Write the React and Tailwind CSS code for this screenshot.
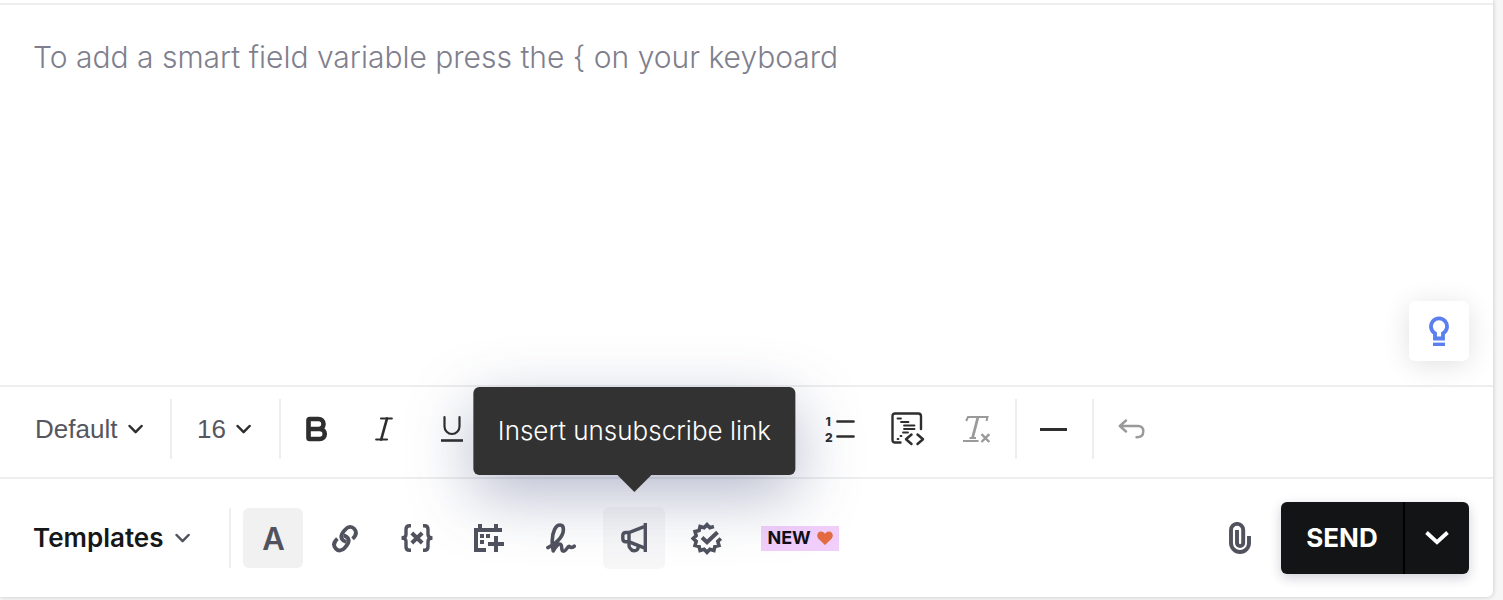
import React from "react";
import { Bold } from "lucide-react";

function Chevron({ className = "" }) {
  return (
    <svg viewBox="0 0 16 10" className={`h-[10px] w-4 ${className}`} fill="none" stroke="currentColor" strokeWidth="2.5" strokeLinecap="round" strokeLinejoin="round">
      <path d="M1.6 2 L7.6 8.2 L13.6 2" />
    </svg>
  );
}

function ToolSelect({ label, value, className }) {
  return (
    <label className={`relative flex items-center text-[#55565f] ${className}`}>
      <select aria-label={label} defaultValue={value} className="appearance-none bg-transparent pr-[26px] text-[26px] leading-8 outline-none">
        <option>{value}</option>
      </select>
      <Chevron className="pointer-events-none absolute right-0 text-[#2e2e2e]" />
    </label>
  );
}

function Divider({ className = "" }) {
  return <div className={`h-[60px] w-0.5 shrink-0 bg-[#eeeeef] ${className}`} />;
}

function FormatButton({ label, className = "text-[#2e2e2e]", children }) {
  return (
    <button type="button" aria-label={label} className={`flex h-[60px] w-[68px] shrink-0 items-center justify-center ${className}`}>
      {children}
    </button>
  );
}

function ActionButton({ label, className = "w-[60px] h-[60px]", children }) {
  return (
    <button type="button" aria-label={label} className={`relative flex shrink-0 items-center justify-center rounded-md text-[#50525e] ${className}`}>
      {children}
    </button>
  );
}

const sealPoints = Array.from({ length: 24 }, (_, i) => {
  const angle = (i * 15 * Math.PI) / 180;
  const radius = i % 2 === 0 ? 13.8 : 11.2;
  return `${(15 + radius * Math.cos(angle)).toFixed(2)} ${(15.5 + radius * Math.sin(angle)).toFixed(2)}`;
}).slice(0, 21);

function FormatBar() {
  return (
    <div className="box-content flex h-[84px] items-center border-t-2 border-[#eeeeef] pb-1.5">
      <ToolSelect label="Font" value="Default" className="ml-[35px]" />
      <Divider className="ml-[26px]" />
      <ToolSelect label="Font size" value="16" className="ml-[25px]" />
      <Divider className="ml-[27px]" />
      <FormatButton label="Bold" className="ml-px text-[#2e2e2e]"><Bold size={30} strokeWidth={3.7} /></FormatButton>
      <FormatButton label="Italic">
        <svg viewBox="0 0 18 24" className="h-6 w-[18px]" fill="none" stroke="currentColor" strokeWidth="2.2" strokeLinecap="round">
          <path d="M6 1.5 H16.8 M1.2 22.5 H12" />
          <path strokeWidth="2.7" d="M12 1.5 L6.2 22.5" />
        </svg>
      </FormatButton>
      <FormatButton label="Underline">
        <svg viewBox="0 0 24 26" className="h-[26px] w-6" fill="none" stroke="currentColor" strokeWidth="2.2" strokeLinecap="round">
          <path d="M4.5 1.2 V10.5 A7.5 7.5 0 0 0 19.5 10.5 V1.2" />
          <path d="M1 24.5 H23" strokeLinecap="butt" strokeWidth="2.6" />
        </svg>
      </FormatButton>
      <div className="w-80 shrink-0" />
      <FormatButton label="Numbered list">
        <svg viewBox="0 0 30 28" className="h-7 w-[30px]" fill="currentColor">
          <text x="0.5" y="10.5" fontSize="12" fontWeight="800" fontFamily="Inter, sans-serif">1</text>
          <text x="0" y="26.5" fontSize="12" fontWeight="800" fontFamily="Inter, sans-serif">2</text>
          <path d="M12.5 6.5 H28.5 M12.5 21.5 H28.5" stroke="currentColor" strokeWidth="2.7" strokeLinecap="round" />
        </svg>
      </FormatButton>
      <FormatButton label="Source code">
        <svg viewBox="0 0 34 34" className="h-[34px] w-[34px]" fill="none" stroke="currentColor" strokeLinecap="round" strokeLinejoin="round">
          <path strokeWidth="2.4" d="M9.5 30.5 H4.2 Q1.5 30.5 1.5 27.8 V4.2 Q1.5 1.5 4.2 1.5 H27.3 Q30 1.5 30 4.2 V17" />
          <path strokeWidth="1.8" d="M6.5 6.5 H10 M10 10 H17.5 M13 13.5 H23.5 M13 17 H23.5 M12 20.5 H17 M9.5 24 H10.5 M6.5 27 H7.5" />
          <path strokeWidth="2.5" d="M20.5 22.5 L15 27.3 L20.5 32 M26.5 22.5 L32 27.3 L26.5 32" />
        </svg>
      </FormatButton>
      <FormatButton label="Clear formatting" className="ml-px text-[#9a9a9b]">
        <svg viewBox="0 0 28 28" className="h-7 w-7" fill="none" stroke="currentColor" strokeWidth="2">
          <path d="M3.2 6 L5 2 H24.5 L23.5 6" />
          <path strokeWidth="2.8" d="M15 2 L9.5 23" />
          <path d="M6.5 23 H13" />
          <path d="M0 26 H15.5" />
          <path strokeWidth="2.4" d="M18.5 19.2 L26.3 27 M26.3 19.2 L18.5 27" />
        </svg>
      </FormatButton>
      <Divider className="ml-1" />
      <FormatButton label="Horizontal line" className="ml-0.5 text-[#2e2e2e]">
        <span className="h-[3px] w-[27px] bg-current" />
      </FormatButton>
      <Divider className="ml-[5px]" />
      <FormatButton label="Undo" className="ml-[3px] text-[#9a9a9b]">
        <svg viewBox="0 0 27 20" className="h-5 w-[27px]" fill="none" stroke="currentColor" strokeWidth="2.4" strokeLinecap="round" strokeLinejoin="round">
          <path d="M8 1.5 L1.8 7 L8 12.5 M2 7 H20 Q25.3 7 25.3 12.5 Q25.3 18.2 18.5 18.2" />
        </svg>
      </FormatButton>
    </div>
  );
}

function Tooltip({ children }) {
  return (
    <span role="tooltip" className="absolute bottom-[94px] left-1/2 z-10 flex h-[88px] -translate-x-1/2 items-center whitespace-nowrap rounded-md bg-[#323232] px-6 text-[26px] font-light leading-8 text-white shadow-[0_20px_64px_rgba(60,70,120,0.38)]">
      {children}
      <svg viewBox="0 0 34 17" className="absolute left-1/2 top-full h-[17px] w-[34px] -translate-x-1/2" fill="#323232">
        <path d="M0 0 H34 L17 17 Z" />
      </svg>
    </span>
  );
}

function ActionBar() {
  return (
    <div className="box-content flex h-[118px] items-center border-t-2 border-[#eeeeef]">
      <button type="button" className="ml-[33px] flex items-center gap-3 text-[26px] font-semibold leading-8 text-[#161718]">
        Templates
        <Chevron className="text-[#50525e]" />
      </button>
      <Divider className="ml-[38px]" />
      <div className="ml-3 flex items-center gap-3">
        <ActionButton label="Text formatting" className="h-[60px] w-[60px] bg-[#f1f1f1]">
          <span className="text-[31px] font-semibold leading-none">A</span>
        </ActionButton>
        <ActionButton label="Insert link">
          <svg viewBox="0 0 32 32" className="h-8 w-8" fill="none" stroke="currentColor" strokeWidth="3.8">
            <path d="M23.6 16.8 C27.4 13.2 27.8 9.6 25.2 6.8 C22.6 4 19 4.4 16.4 7.4 C13.6 10.6 11.6 12.4 12.4 15.6 C13 18 14.8 19.2 17.4 20" />
            <path d="M8.4 16.6 C4.6 20.2 4.2 23.8 6.8 26.6 C9.4 29.4 13 29 15.6 26 C18.4 22.8 20.4 21 19.6 17.8 C19 15.4 17.2 14.2 14.6 13.4" />
          </svg>
        </ActionButton>
        <ActionButton label="Insert variable">
          <svg viewBox="0 0 32 28" className="h-7 w-8" fill="none" stroke="currentColor" strokeWidth="3.4">
            <path d="M10 1.7 H8.5 Q5 1.7 5 5.2 V10.5 Q5 14 0.5 14 Q5 14 5 17.5 V22.8 Q5 26.3 8.5 26.3 H10" />
            <path d="M22 1.7 H23.5 Q27 1.7 27 5.2 V10.5 Q27 14 31.5 14 Q27 14 27 17.5 V22.8 Q27 26.3 23.5 26.3 H22" />
            <path strokeWidth="4" d="M10.8 9 L21.2 19 M21.2 9 L10.8 19" />
          </svg>
        </ActionButton>
        <ActionButton label="Insert calendar">
          <svg viewBox="0 0 30 28" className="h-7 w-[30px]" fill="currentColor" shapeRendering="crispEdges">
            <path d="M0 4 H4 V0 H8 V4 H20 V0 H24 V4 H28 V8 H4 V24 H12 V28 H0 Z" />
            <path d="M6 10 H10 V14 H6 Z M12 10 H16 V14 H12 Z M6 16 H10 V20 H6 Z" />
            <path d="M20 12 H24 V18 H30 V22 H24 V28 H20 V22 H14 V18 H20 Z" />
          </svg>
        </ActionButton>
        <ActionButton label="Insert signature">
          <svg viewBox="0 0 30 30" className="h-[30px] w-[30px]" fill="none" stroke="currentColor" strokeWidth="3.6" strokeLinecap="round" strokeLinejoin="round">
            <path d="M1.9 24.6 C9 21.5 17.4 14 17.4 6.4 C17.4 0.8 11.6 0.4 8.6 6.4 C5.6 12.6 5.6 20 7.2 28 C9.2 24 12.6 20 14.6 21.2 C16.8 22.6 14.4 28.2 17.6 28.2 C20.4 28.2 21.4 23 23.2 23.4 C24.8 24 24.8 25.8 28.2 23.2" />
          </svg>
        </ActionButton>
        <ActionButton label="Insert unsubscribe link" className="h-[62px] w-[62px] bg-[#f7f7f8]">
          <svg viewBox="0 0 26 30" className="h-[30px] w-[26px]" fill="none" stroke="currentColor" strokeWidth="3.4">
            <path d="M24.3 0 V29 M24.5 3.2 L8 9.5 H5 Q1.8 9.5 1.8 12.5 V15.8 Q1.8 18.8 5 18.8 H8 L24.5 25.4 M8 9.5 V22.5 Q8 24.5 9.8 26 Q11 27.8 13 27.8 Q17.5 27.8 17.2 23.2" />
          </svg>
          <Tooltip>Insert unsubscribe link</Tooltip>
        </ActionButton>
        <ActionButton label="Content quality check">
          <svg viewBox="0 0 30 31" className="h-[31px] w-[30px] overflow-visible" fill="none" stroke="currentColor" strokeWidth="3.6">
            <path d={`M${sealPoints.join(" L")}`} />
            <path strokeWidth="4" d="M10 14.5 L15 19.2 L25.5 9.2" />
          </svg>
        </ActionButton>
      </div>
      <span className="ml-6 flex h-[25px] items-center gap-1.5 bg-[#f2cffb] px-1.5 text-[18px] font-bold leading-none text-[#0f0f14]">
        NEW
        <svg viewBox="0 0 16 14" className="h-[14px] w-4" fill="#e46c42">
          <path d="M8 14 L1.2 7.4 C-1 4.6 0.6 0.4 4 0.4 C6 0.4 7.3 1.4 8 2.8 C8.7 1.4 10 0.4 12 0.4 C15.4 0.4 17 4.6 14.8 7.4 Z" />
        </svg>
      </span>
      <div className="ml-auto mr-6 flex items-center gap-[30px]">
        <button type="button" aria-label="Attach file" className="text-[#50525e]">
          <svg viewBox="0 0 22 32" className="h-8 w-[22px]" fill="none" stroke="currentColor" strokeWidth="3.9">
            <path d="M20 14 V21 A9 9 0 0 1 2 21 V8 A6.1 6.1 0 0 1 14.2 8 V21 A3.1 3.1 0 0 1 8 21 V8" />
          </svg>
        </button>
        <div className="flex h-[72px] overflow-hidden rounded-md bg-[#131416] text-white shadow-[0_4px_12px_rgba(40,40,90,0.22)]">
          <button type="button" className="w-[122px] text-center text-[26px] font-bold leading-8">SEND</button>
          <button type="button" aria-label="Send options" className="flex w-[66px] items-center justify-center border-l-2 border-black">
            <svg viewBox="0 0 24 14" className="h-[14px] w-6" fill="none" stroke="currentColor" strokeWidth="3.8">
              <path d="M1.5 1.5 L12 11.2 L22.5 1.5" />
            </svg>
          </button>
        </div>
      </div>
    </div>
  );
}

export default function App() {
  return (
    <div className="flex min-h-screen flex-col bg-[#f6f6f6] pb-[3px] pr-[10px] font-['Inter',sans-serif]">
      <main className="flex grow flex-col rounded-br-md bg-white pt-[3px] shadow-[0_0_5px_rgba(0,0,0,0.2)]">
        <div className="relative flex grow border-t-2 border-[#eeeeef]">
          <textarea
            aria-label="Message"
            placeholder="To add a smart field variable press the { on your keyboard"
            className="grow resize-none bg-transparent px-[33px] pt-8 text-[30px] font-light leading-10 text-[#33343c] outline-none placeholder:text-[#7f7f8e]"
          />
          <button type="button" aria-label="Suggestions" className="absolute bottom-6 right-6 flex h-[60px] w-[60px] items-center justify-center rounded-md bg-white text-[#5b7fee] shadow-[0_4px_28px_rgba(0,0,0,0.12)]">
            <svg viewBox="0 0 20 30" className="h-[30px] w-5" fill="none" stroke="currentColor" strokeWidth="3.8">
              <path d="M6 22.5 V17.4 A8 8 0 1 1 14 17.4 V22.5 Z" />
              <path d="M4 28.4 H16" strokeWidth="3.6" />
            </svg>
          </button>
        </div>
        <div className="font-['Liberation_Sans',sans-serif]"><FormatBar /></div>
        <ActionBar />
      </main>
    </div>
  );
}
